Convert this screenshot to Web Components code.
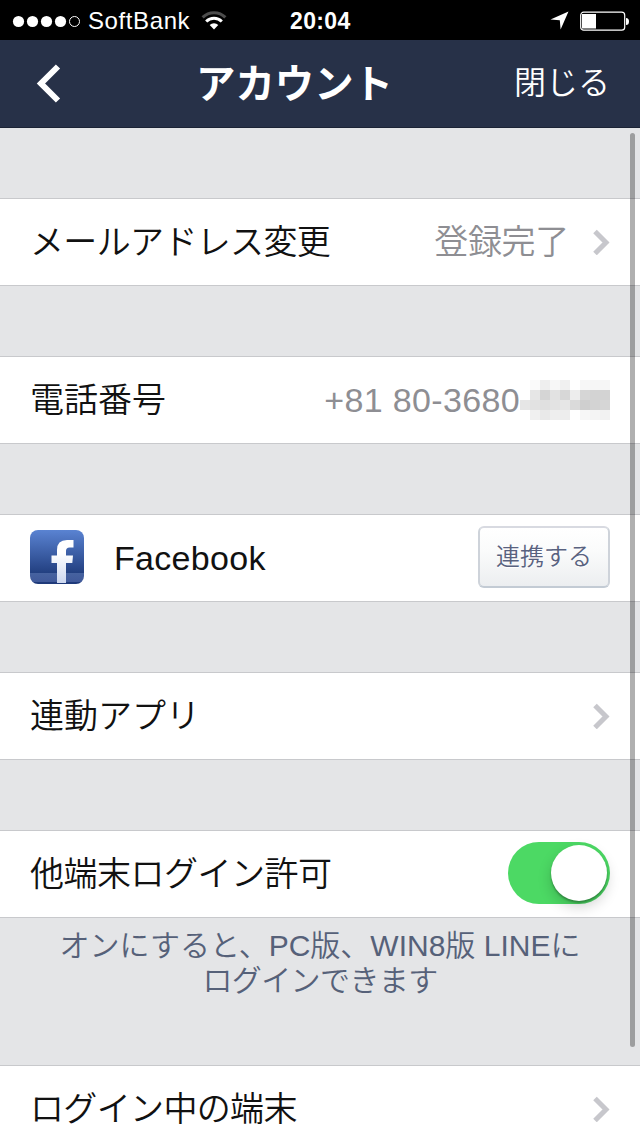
<!DOCTYPE html>
<html lang="ja">
<head>
<meta charset="utf-8">
<title>アカウント</title>
<style>
body {
    margin: 0;
    width: 640px;
    height: 1136px;
    overflow: hidden;
    font-family: "Liberation Sans", "Noto Sans CJK JP", sans-serif;
}
</style>
</head>
<body>
<account-screen></account-screen>
<script>
function define(name, html) {
    const template = document.createElement("template");
    template.innerHTML = html;
    customElements.define(name, class extends HTMLElement {
        constructor() {
            super();
            this.attachShadow({mode: "open"});
            this.shadowRoot.appendChild(template.content.cloneNode(true));
        }
    });
}

define("status-bar", `
<style>
:host {
    display: grid;
    grid-template-columns: 290px 60px 1fr;
    align-items: center;
    height: 40px;
    background: #000;
    color: #fff;
    font-size: 24px;
    line-height: 40px;
}
div {
    display: flex;
    align-items: center;
}
.signal {
    padding-left: 12px;
}
.carrier {
    margin: 1px 11px 0 7px;
    letter-spacing: 0.6px;
    white-space: nowrap;
}
.time {
    padding-top: 1px;
    font-weight: bold;
    font-size: 23px;
    letter-spacing: 0.35px;
    white-space: nowrap;
}
.power {
    justify-content: flex-end;
    gap: 11px;
    padding-right: 10px;
}
svg {
    display: block;
}
</style>
<div class="signal">
    <svg width="69" height="14" fill="#fff">
        <circle cx="6.5" cy="7.5" r="5.6"/>
        <circle cx="20.5" cy="7.5" r="5.6"/>
        <circle cx="34.5" cy="7.5" r="5.6"/>
        <circle cx="48.5" cy="7.5" r="5.6"/>
        <circle cx="62.5" cy="7.5" r="5" fill="none" stroke="#fff"/>
    </svg>
    <span class="carrier">SoftBank</span>
    <svg width="26" height="20" viewBox="0 0 26 20" fill="none" stroke-width="3">
        <path d="M1.6 6.4a16 16 0 0 1 22.8 0" stroke="#4c4c4c"/>
        <path d="M5.2 10.5a11 11 0 0 1 15.6 0" stroke="#fff"/>
        <path d="M13 18.5l-4.3-4.4a6.2 6.2 0 0 1 8.6 0z" fill="#fff"/>
    </svg>
</div>
<span class="time">20:04</span>
<div class="power">
    <svg width="19" height="19" fill="#fff"><path d="M18.5 0.5L10.6 18.5L9.8 9.3L0.5 8.5z"/></svg>
    <svg width="50" height="20">
        <rect x="0.7" y="1.2" width="44" height="18" rx="3" fill="none" stroke="#fff" stroke-width="1.2"/>
        <rect x="2" y="3" width="14" height="14.5" fill="#fff"/>
        <path d="M46 7q3 0 3 3.5t-3 3.5z" fill="#fff"/>
    </svg>
</div>
`);

define("nav-bar", `
<style>
:host {
    display: grid;
    grid-template-columns: 128px 1fr 126px;
    align-items: center;
    box-sizing: border-box;
    height: 88px;
    border-bottom: 1px solid #1b2335;
    background: #273148;
    color: #fff;
}
svg {
    display: block;
    margin-left: 35px;
}
h1 {
    margin: 0;
    padding: 0 53px 0 0;
    font-size: 39.4px;
    font-weight: bold;
    line-height: 60px;
    text-align: center;
    white-space: nowrap;
}
.close {
    padding-bottom: 8px;
    font-size: 32px;
    font-weight: 350;
    white-space: nowrap;
}
</style>
<svg width="27" height="42" fill="none" stroke="#fff" stroke-width="6"><path d="M23 3.5L6 20.5L23 37.5"/></svg>
<h1><slot></slot></h1>
<span class="close"><slot name="action"></slot></span>
`);

define("setting-row", `
<style>
:host {
    display: flex;
    align-items: center;
    box-sizing: border-box;
    height: 88px;
    padding: 0 30px;
    border-top: 1px solid #c8c9cc;
    border-bottom: 1px solid #c8c9cc;
    background: #fff;
    color: #111;
    font-size: 34px;
    font-weight: 350;
    line-height: 60px;
    white-space: nowrap;
}
.label {
    flex: 1;
    letter-spacing: var(--tracking, 0);
}
.value {
    color: #8e8e93;
    letter-spacing: var(--value-tracking, 0);
}
</style>
<slot name="icon"></slot>
<span class="label"><slot></slot></span>
<span class="value"><slot name="value"></slot></span>
<slot name="accessory"></slot>
`);

define("chevron-icon", `
<style>
:host {
    display: block;
    margin-left: 24px;
}
svg {
    display: block;
}
</style>
<svg width="17" height="26" fill="none" stroke="#c7c7cc" stroke-width="5"><path d="M2 2.5L13 13.5L2 24.5"/></svg>
`);

define("facebook-icon", `
<style>
:host {
    display: block;
    width: 54px;
    margin: 0 30px 2px 0;
}
svg {
    display: block;
}
</style>
<svg width="54" height="54">
    <defs>
        <linearGradient id="back" x2="0" y2="1">
            <stop stop-color="#5a83d2"/>
            <stop offset="0.8" stop-color="#223f80"/>
            <stop offset="0.8" stop-color="#46629f"/>
            <stop offset="0.96" stop-color="#40599a"/>
            <stop offset="0.97" stop-color="#1f3a7a"/>
        </linearGradient>
        <linearGradient id="front" x2="0" y2="1">
            <stop offset="0.3" stop-color="#fff"/>
            <stop offset="1" stop-color="#ccd7ef"/>
        </linearGradient>
    </defs>
    <rect width="54" height="54" rx="8" fill="url(#back)"/>
    <path d="M27 53V33H21.5V25.5H27V20Q27 10 37 10H43.5V17.5H39.5Q36 17.5 36 21V25.5H43L42.3 33H36V53z" fill="url(#front)"/>
</svg>
`);

define("link-button", `
<style>
:host {
    display: block;
    margin-bottom: 2px;
}
button {
    display: block;
    box-sizing: border-box;
    width: 132px;
    height: 62px;
    padding: 0 0 1px;
    border: 2px solid;
    border-color: #d8dae1 #ced3da #c3cbd4;
    border-radius: 6px;
    background: linear-gradient(#fff, #fafbfb 40%, #eceef0);
    color: #59627f;
    font: inherit;
    font-size: 24px;
    line-height: 50px;
    text-shadow: 0 1px #fff;
}
</style>
<button><slot></slot></button>
`);

define("toggle-switch", `
<style>
:host {
    display: flex;
    align-items: center;
    justify-content: flex-end;
    box-sizing: border-box;
    width: 102px;
    height: 62px;
    margin-bottom: 2px;
    padding-right: 3px;
    border-radius: 31px;
    background: #4cd964;
}
span {
    width: 56px;
    height: 56px;
    border-radius: 50%;
    background: #fff;
    box-shadow: 0 2px 2px rgba(0, 0, 0, 0.28), 0 6px 14px rgba(0, 0, 0, 0.18);
}
</style>
<span></span>
`);

// Censored tail of the phone number, one 10px cell per grey level
customElements.define("pixel-mask", class extends HTMLElement {
    constructor() {
        super();
        this.attachShadow({mode: "open"});
        const rows = [
            "ff fa ee f7 f0 ff f7 f6 f6",
            "ff e6 d5 e2 d7 ed d6 d3 d3",
            "e6 e2 e0 e3 e6 da cf d3 d6",
            "ff f0 e9 ee ed ff f7 f4 f2"
        ];
        const cells = rows.join(" ").split(" ").map(c => `<i style="background:#${c}${c}${c}"></i>`);
        this.shadowRoot.innerHTML = `
<style>
:host {
    display: grid;
    grid-template-columns: repeat(9, 10px);
    grid-auto-rows: 10px;
}
</style>
${cells.join("")}`;
    }
});

define("account-screen", `
<style>
:host {
    display: block;
    position: relative;
    width: 640px;
    height: 1136px;
    overflow: hidden;
    background: #e4e5e7;
}
main {
    display: flex;
    flex-direction: column;
    gap: 70px;
    padding-top: 70px;
}
.mail, .devices {
    --tracking: -0.65px;
}
.mail {
    --value-tracking: -0.3px;
}
.phone {
    --value-tracking: 0.35px;
}
.facebook {
    --tracking: 0.3px;
}
.login {
    --tracking: -0.5px;
}
section p {
    box-sizing: border-box;
    margin: 0;
    height: 77px;
    padding-top: 10px;
    color: #566179;
    font-size: 30px;
    font-weight: 350;
    line-height: 35px;
    text-align: center;
    white-space: nowrap;
}
section p span {
    letter-spacing: -0.6px;
}
.scroll {
    position: absolute;
    top: 133px;
    right: 5px;
    width: 5px;
    height: 914px;
    border-radius: 3px;
    background: rgba(0, 0, 0, 0.31);
}
</style>
<status-bar></status-bar>
<nav-bar>アカウント<span slot="action">閉じる</span></nav-bar>
<main>
    <setting-row class="mail">メールアドレス変更<span slot="value">登録完了</span><chevron-icon slot="accessory"></chevron-icon></setting-row>
    <setting-row class="phone">電話番号<span slot="value">+81 80-3680</span><pixel-mask slot="accessory"></pixel-mask></setting-row>
    <setting-row class="facebook"><facebook-icon slot="icon"></facebook-icon>Facebook<link-button slot="accessory">連携する</link-button></setting-row>
    <setting-row>連動アプリ<chevron-icon slot="accessory"></chevron-icon></setting-row>
    <section>
        <setting-row class="login">他端末ログイン許可<toggle-switch slot="accessory"></toggle-switch></setting-row>
        <p>オンにすると、PC版、WIN8版 LINEに<br><span>ログインできます</span></p>
    </section>
    <setting-row class="devices">ログイン中の端末<chevron-icon slot="accessory"></chevron-icon></setting-row>
</main>
<div class="scroll"></div>
`);
</script>
</body>
</html>
